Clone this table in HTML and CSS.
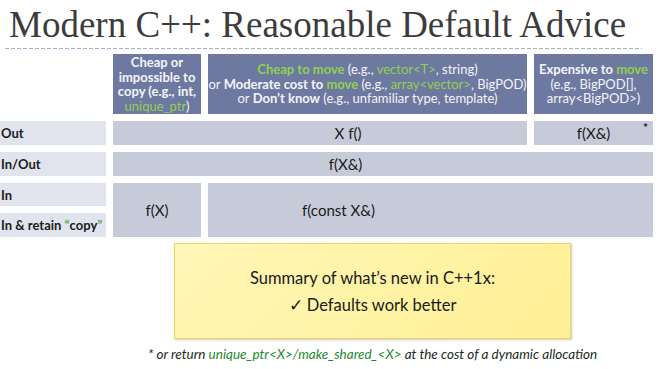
FILE: index.html
```html
<!DOCTYPE html>
<html>
<head>
<meta charset="utf-8">
<link rel="stylesheet" href="styles.css">
</head>
<body>
<div class="page">
  <h1 class="title">Modern C++: Reasonable Default Advice</h1>
  <div class="rule"></div>
  <div class="grid">
    <div class="blank"></div>
    <div class="head h1c"><b>Cheap or<br>impossible to<br>copy (e.g., int,</b><br><span class="g">unique_ptr</span>)</div>
    <div class="head h2c"><div><b class="g">Cheap to move</b> (e.g., <span class="g">vector&lt;T&gt;</span>, string)<br>or <b>Moderate cost to <span class="g">move</span></b> (e.g., <span class="g">array&lt;vector&gt;</span>, BigPOD)<br>or <b>Don’t know</b> (e.g., unfamiliar type, template)</div></div>
    <div class="head h3c"><div><b>Expensive to <span class="g">move</span></b><br>(e.g., BigPOD[],<br>array&lt;BigPOD&gt;)</div></div>

    <div class="label r-out">Out</div>
    <div class="cell c-out">X f()</div>
    <div class="cell c-outr">f(X&amp;)<span class="star">*</span></div>

    <div class="label r-io">In/Out</div>
    <div class="cell c-io">f(X&amp;)</div>

    <div class="label r-in">In</div>
    <div class="label r-ret">In &amp; retain&nbsp;<span class="q">“</span>copy<span class="q">”</span></div>
    <div class="cell c-fx">f(X)</div>
    <div class="cell c-fc">f(const X&amp;)</div>
  </div>
  <div class="bottom">
    <div class="summary">
      <div>Summary of what’s new in C++1x:</div>
      <div>✓ Defaults work better</div>
    </div>
    <div class="foot"><span>* or return <span class="fg">unique_ptr&lt;X&gt;/make_shared_&lt;X&gt;</span> at the cost of a dynamic allocation</span></div>
  </div>
</div>
</body>
</html>
```
FILE: styles.css
```css
html, body {
  margin: 0;
  padding: 0;
  background: #ffffff;
}
.page {
  width: 660px;
  height: 369px;
  overflow: hidden;
  font-family: Lato, "Open Sans", sans-serif;
}
.title {
  margin: 0;
  padding: 3px 0 0 9px;
  height: 44px;
  font-family: "Liberation Serif", serif;
  font-weight: normal;
  font-size: 37px;
  line-height: 44px;
  color: #3c3c3c;
  white-space: nowrap;
}
.rule {
  margin: 1px 18px 0 5px;
  height: 1px;
  background: repeating-linear-gradient(90deg, #9fb1cc 0 4px, transparent 4px 6px);
}
.grid {
  margin-top: 5px;
  display: grid;
  grid-template-columns: 106px 88px 319px 119px;
  grid-template-rows: 60px 24px 24px 23px 24px;
  column-gap: 7px;
  row-gap: 7px;
}
.head {
  background: #6e79a1;
  color: #f4f4f8;
  font-size: 13px;
  line-height: 14.7px;
  text-align: center;
  display: flex;
  align-items: center;
  justify-content: center;
}
.h1c { grid-column: 2; grid-row: 1; display: block; padding-top: 1px; }
.h2c { grid-column: 3; grid-row: 1; }
.h3c { grid-column: 4; grid-row: 1; }
.g { color: #92d050; font-weight: normal; }
b.g, b .g { font-weight: bold; }
.label {
  grid-column: 1;
  background: #e1e4ec;
  color: #1c1c1c;
  font-weight: bold;
  font-size: 13px;
  display: flex;
  align-items: center;
  padding-left: 1px;
  white-space: nowrap;
}
.q { color: #4caf50; }
.r-out { grid-row: 2; }
.r-io { grid-row: 3; }
.r-in { grid-row: 4; }
.r-ret { grid-row: 5; }
.cell {
  background: #c7cbd9;
  color: #1a1a1a;
  font-size: 15px;
  display: flex;
  align-items: center;
  justify-content: center;
  position: relative;
}
.c-out { grid-column: 2 / 4; grid-row: 2; padding-left: 56px; }
.c-outr { grid-column: 4; grid-row: 2; }
.c-io { grid-column: 2 / 5; grid-row: 3; padding-right: 75px; }
.c-fx { grid-column: 2; grid-row: 4 / 6; }
.c-fc { grid-column: 3 / 5; grid-row: 4 / 6; padding-right: 184px; }
.star {
  position: absolute;
  right: 5px;
  top: -1px;
  font-size: 12px;
  font-weight: bold;
}
.bottom {
  margin-left: 174px;
  width: 397px;
  display: flex;
  flex-direction: column;
  align-items: center;
}
.summary {
  margin-top: 6px;
  width: 395px;
  height: 93px;
  border: 1px solid #f3d261;
  background: linear-gradient(135deg, #fff7b8 0%, #ffef94 100%);
  box-shadow: 1px 1px 2px rgba(0, 0, 0, 0.22);
  display: flex;
  flex-direction: column;
  align-items: center;
  justify-content: center;
  font-size: 16.5px;
  line-height: 27px;
  color: #1a1a1a;
  padding-top: 1px;
}
.foot {
  margin-top: 6px;
  width: 397px;
  display: flex;
  justify-content: center;
  white-space: nowrap;
  font-style: italic;
  font-size: 13.5px;
  line-height: 18px;
  color: #1c2b1c;
}
.fg { color: #1d8a2c; }
```
